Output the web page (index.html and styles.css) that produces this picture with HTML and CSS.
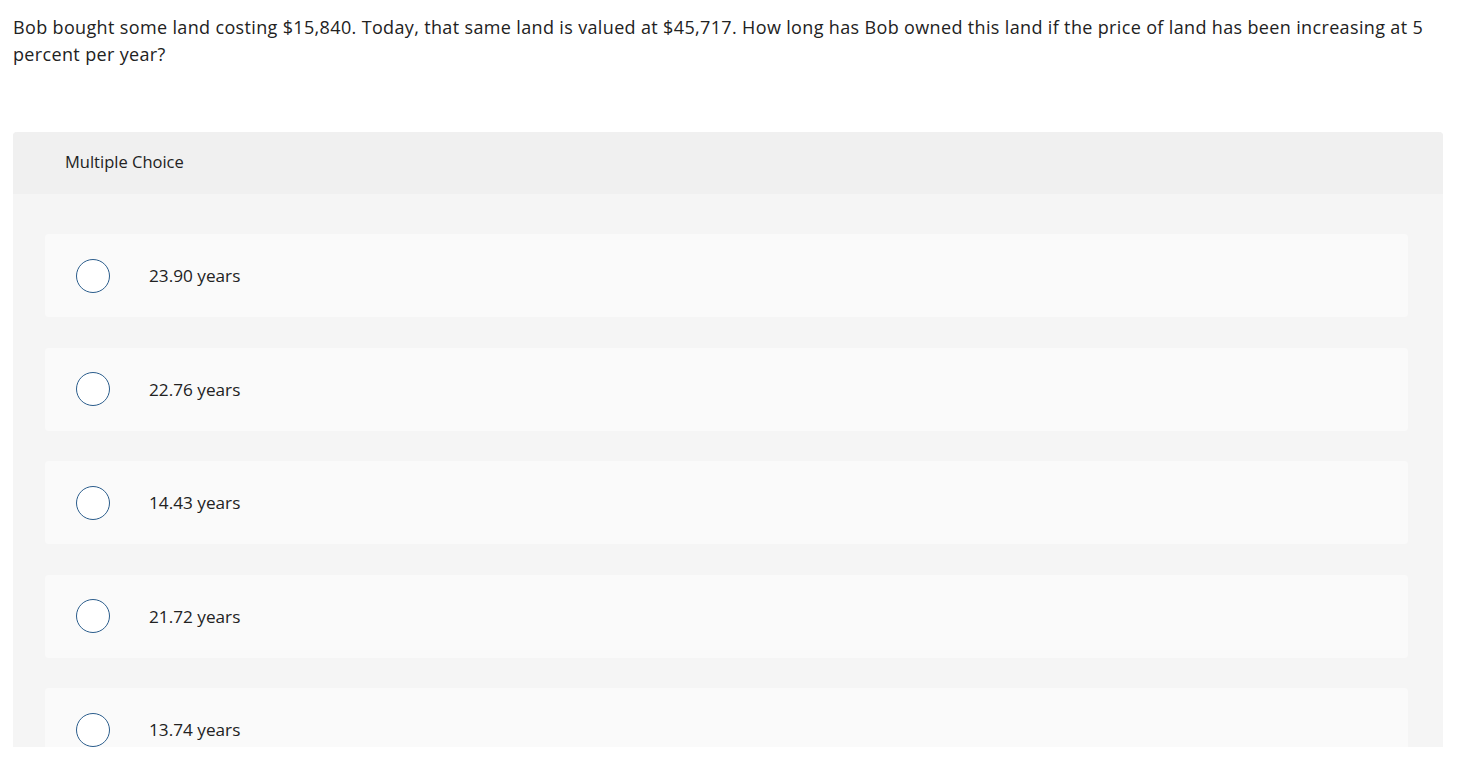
FILE: index.html
```html
<!DOCTYPE html>
<html>
<head>
<meta charset="utf-8">
<link rel="stylesheet" href="styles.css">
</head>
<body>
<div class="page">
  <p class="question">Bob bought some land costing $15,840. Today, that same land is valued at $45,717. How long has Bob owned this land if the price of land has been increasing at 5 percent per year?</p>
  <div class="panel">
    <div class="panel-head">Multiple Choice</div>
    <div class="panel-body">
      <div class="option"><span class="radio"></span><span class="label">23.90 years</span></div>
      <div class="option"><span class="radio"></span><span class="label">22.76 years</span></div>
      <div class="option"><span class="radio"></span><span class="label">14.43 years</span></div>
      <div class="option"><span class="radio"></span><span class="label">21.72 years</span></div>
      <div class="option"><span class="radio"></span><span class="label">13.74 years</span></div>
    </div>
  </div>
</div>
</body>
</html>
```
FILE: styles.css
```css
html, body {
  margin: 0;
  padding: 0;
  background: #ffffff;
}
body {
  font-family: "Open Sans", "Liberation Sans", sans-serif;
  color: #222222;
}
.page {
  padding: 14px 28px 0 13px;
}
.question {
  margin: 0;
  font-size: 18px;
  line-height: 27px;
  letter-spacing: 0.35px;
  color: #222;
  padding-right: 4px;
}
.panel {
  margin-top: 64px;
  height: 615px;
  overflow: hidden;
  border-radius: 4px 4px 0 0;
  background: #f5f5f5;
}
.panel-head {
  height: 62px;
  box-sizing: border-box;
  padding-bottom: 3px;
  background: #f0f0f0;
  display: flex;
  align-items: center;
  padding-left: 52px;
  font-size: 16.5px;
  color: #222;
}
.panel-body {
  padding: 40px 35px 0 32px;
  display: flex;
  flex-direction: column;
  gap: 30.5px;
}
.option {
  height: 83px;
  flex: none;
  background: #fafafa;
  border-radius: 4px;
  display: flex;
  align-items: center;
  padding-left: 31px;
}
.radio {
  width: 32px;
  height: 32px;
  border: 1.5px solid #2b5d8c;
  border-radius: 50%;
  background: #fff;
  flex: none;
}
.label {
  margin-left: 39px;
  font-size: 17.2px;
  color: #222;
}
```
